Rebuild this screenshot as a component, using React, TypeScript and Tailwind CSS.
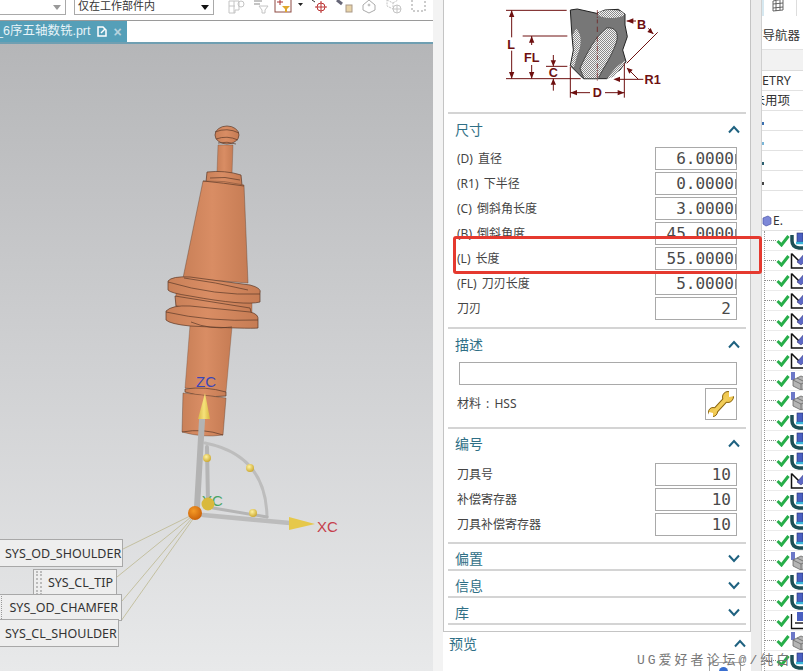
import React from "react";

function Chevron({ up, className = "" }: { up: boolean; className?: string }) {
  return (
    <svg width="12" height="9" viewBox="0 0 12 9" className={className}>
      <path d={up ? "M1 7.5 L6 2 L11 7.5" : "M1 1.5 L6 7 L11 1.5"} fill="none" stroke="#1f6280" strokeWidth="2" />
    </svg>
  );
}

function NumBox({ value, clip }: { value: string; clip?: boolean }) {
  return (
    <div className="w-[82px] h-[23px] shrink-0 border border-[#a9a9a9] bg-white overflow-hidden flex items-center justify-end font-['DejaVu_Sans_Mono',monospace] text-[16px] text-[#4a4a4a]">
      <span className={clip ? "mr-[1px] whitespace-nowrap" : "mr-[5px] whitespace-nowrap"}>{value}</span>
      {clip && <span className="w-[1px] h-[10px] shrink-0 bg-[#888]" />}
    </div>
  );
}

function Row({ label, value, clip = true }: { label: string; value: string; clip?: boolean }) {
  return (
    <div className="h-[25px] flex items-center justify-between pl-[9px] pr-[9px]">
      <span className="text-[12px] text-[#444] [word-spacing:2px]">{label}</span>
      <NumBox value={value} clip={clip} />
    </div>
  );
}

function Header({ title, up, cls }: { title: string; up: boolean; cls: string }) {
  return (
    <div className={`${cls} flex items-center justify-between pl-[7px] pr-[6px]`}>
      <span className="text-[14px] text-[#2f6f86]">{title}</span>
      <Chevron up={up} />
    </div>
  );
}

function Diagram() {
  const c = "#6e1010";
  return (
    <svg width="190" height="110" viewBox="0 0 570 330">
      <defs>
        <pattern id="hatch" width="6" height="6" patternUnits="userSpaceOnUse">
          <rect width="6" height="6" fill="#f4f4f4" />
          <rect width="3" height="3" fill="#8a8a8a" />
          <rect x="3" y="3" width="3" height="3" fill="#8a8a8a" />
        </pattern>
      </defs>
      <path d="M241 30 L262 27 L320 40 L345 30 L385 28 L405 42 L405 75 L412 110 L398 150 L408 185 L390 210 L350 236 L280 236 L241 197 L250 150 L246 110 Z" fill="#777" stroke="#222" strokeWidth="3" />
      <ellipse cx="363" cy="42" rx="40" ry="12" fill="url(#hatch)" />
      <path d="M258 86 C276 100 276 135 262 165 L252 202 L243 195 L252 150 L248 105 Z" fill="url(#hatch)" />
      <path d="M270 205 C290 160 315 110 350 84 C385 80 385 110 378 130 C360 180 335 210 325 236 L282 236 Z" fill="url(#hatch)" stroke="#222" strokeWidth="2" />
      <path d="M352 236 C375 200 395 190 405 180 L403 192 L372 230 Z" fill="url(#hatch)" />
      <g stroke={c} strokeWidth="3" fill="none">
        <path d="M48 31 H230 M48 236 H272 M98 108 H232 M168 199 H232" />
        <path d="M65 31 V112 M65 152 V236 M125 108 V135 M125 195 V236 M190 165 V199 M190 236 V272" />
        <path d="M241 200 V293 M403 190 V293 M241 278 H300 M345 278 H403" />
        <path d="M410 63 H438 M475 85 L490 102 M503 97 L410 190 M385 238 H460 M445 238 L412 205" />
        <path d="M322 30 V70 M322 80 V100 M322 110 V180 M322 190 V245" strokeWidth="2" strokeDasharray="16 4 4 4" />
      </g>
      <g fill={c}>
        <path d="M65 31 l-8 20 h16 Z M65 236 l-8 -20 h16 Z M125 108 l-8 20 h16 Z M125 236 l-8 -20 h16 Z" />
        <path d="M190 199 l-8 -18 h16 Z M190 236 l-8 18 h16 Z" />
        <path d="M241 278 l20 -8 v16 Z M403 278 l-20 -8 v16 Z" />
        <path d="M410 63 l20 -8 v16 Z M490 102 l-18 -6 l10 -12 Z M370 238 l20 -8 v16 Z M410 203 l18 6 l-10 12 Z" />
      </g>
      <g fill="#6e1010" fontFamily="Liberation Sans, sans-serif" fontWeight="700" fontSize="38" textAnchor="middle">
        <text x="63" y="146">L</text>
        <text x="125" y="187">FL</text>
        <text x="190" y="232">C</text>
        <text x="322" y="291">D</text>
        <text x="455" y="87">B</text>
        <text x="488" y="252">R1</text>
      </g>
    </svg>
  );
}

function ToolIcons() {
  return (
    <svg width="223" height="20" viewBox="210 0 223 20" className="shrink-0">
      <g fill="none" stroke="#c4c4c4" strokeWidth="1">
        <path d="M225 1 h10 v9 h-4 v3 h-6 Z M225 6 h6 M230 1 v12" />
        <circle cx="237" cy="4" r="3" />
        <path d="M250 1 h8 M250 4 h6" strokeWidth="2" />
        <path d="M255 6 h9 l-3 4 v3 h-3 v-3 Z" />
        <path d="M359 5 L365 0 L371 5 L371 10 L365 13 L359 10 Z" stroke="#aaa" />
        <circle cx="365" cy="5" r="1" fill="#aaa" />
        <path d="M383 0 l6 3 v6 l-6 -3 Z M389 3 l5 -3" strokeDasharray="2 1" />
        <circle cx="393" cy="9" r="4" />
        <path d="M393 5 v8 M389 9 h8" />
        <rect x="408" y="-2" width="13" height="13" strokeDasharray="2 2" stroke="#999" />
      </g>
      <rect x="271" y="-2" width="16" height="14" fill="none" stroke="#8d4a42" />
      <path d="M273 2 h6 M276 -1 v6" stroke="#a33" />
      <path d="M278 6 h8 l-3 3 v3 h-2 v-3 Z" fill="#e0a92e" />
      <path d="M294 3 h5 l-2.500 3 Z M430 3 h5 l-2.500 3 Z" fill="#222" />
      <circle cx="317" cy="7" r="4" fill="none" stroke="#b33" />
      <path d="M311 7 h12 M317 1 v12" stroke="#b33" />
      <path d="M308 0 l3 2" stroke="#333" />
      <path d="M333 0 l5 4" stroke="#667" strokeWidth="3" />
      <rect x="342" y="5" width="6" height="7" fill="#e8d3a8" stroke="#a98" />
    </svg>
  );
}

function ToolModel() {
  const edge = "#5c3a28";
  return (
    <svg width="433" height="627" viewBox="0 44 433 627" className="absolute left-0 top-0">
      <defs>
        <linearGradient id="cu" x1="0" x2="1" y1="0" y2="0">
          <stop offset="0" stopColor="#c98058" />
          <stop offset="0.45" stopColor="#d98d64" />
          <stop offset="1" stopColor="#c67c54" />
        </linearGradient>
        <linearGradient id="gold" x1="0" x2="1" y1="0" y2="0">
          <stop offset="0" stopColor="#d8b94a" />
          <stop offset="0.5" stopColor="#f6e27a" />
          <stop offset="1" stopColor="#d8b73f" />
        </linearGradient>
        <radialGradient id="ballY" cx="0.4" cy="0.35" r="0.7">
          <stop offset="0" stopColor="#fff3a0" />
          <stop offset="1" stopColor="#caa52c" />
        </radialGradient>
        <radialGradient id="ballO" cx="0.4" cy="0.35" r="0.7">
          <stop offset="0" stopColor="#f59a26" />
          <stop offset="1" stopColor="#c85f08" />
        </radialGradient>
      </defs>
      <g fill="url(#cu)" stroke={edge} strokeWidth="0.7" strokeLinejoin="round">
        <path d="M218 145 L233 145 L232 174 L217 172 Z" strokeWidth="0.3" />
        <ellipse cx="227" cy="135" rx="12" ry="9" />
        <path d="M215 132 Q227 127 239 133 M216 139 Q227 135 238 140 M218 143 Q227 141 236 144" fill="none" />
        <path d="M207 172 Q225 170 241 175 L242 185 L206 182 Z" />
        <path d="M210 178 Q225 176 240 180" fill="none" />
        <path d="M203 181 Q224 180 244 185 L248 283 L183 278 Z" strokeWidth="0.4" />
        <path d="M203 181 Q224 183 244 186" fill="none" />
        <path d="M190 325 L232 327 L226 392 L185 388 Z" strokeWidth="0.3" />
        <path d="M176 288 L252 296 L252 320 L176 312 Z" strokeWidth="0.3" />
        <path d="M175 296 L250 308 L252 316 L176 306 Z" />
        <path d="M166 311 Q172 305 190 306 L250 312 Q259 314 258 320 L258 328 Q250 329 190 326 Q170 324 166 320 Z" />
        <path d="M166 312 Q210 322 258 320 M191 322 Q210 330 232 327" fill="none" />
        <path d="M168 281 Q172 276 190 277 L250 285 Q262 288 260 293 L260 302 Q245 306 190 296 Q170 293 168 290 Z" />
        <path d="M168 282 Q215 296 260 294 M184 278 Q215 282 248 290" fill="none" />
        <path d="M185 389 Q205 386 226 392 L226 396 Q205 398 185 392 Z" />
        <path d="M183 393 Q205 395 226 398 L223 435 Q203 438 182 432 Z" strokeWidth="0.4" />
        <path d="M182 432 Q203 428 223 435" fill="none" />
      </g>
      <g fill="none" strokeLinecap="round">
        <path d="M207 447 L208 503" stroke="#b5b5b5" strokeWidth="4" />
        <path d="M205 443 Q266 455 267 517" stroke="#bdbdbd" strokeWidth="3" />
        <path d="M213 508 L267 517" stroke="#b5b5b5" strokeWidth="3" />
        <path d="M197 507 L202 420" stroke="#b3b3b3" strokeWidth="6" />
        <path d="M203 515 L290 523" stroke="#bcbcbc" strokeWidth="4.500" />
      </g>
      <path d="M205 393 L198 419 L210 419 Z" fill="url(#gold)" />
      <path d="M315 524 L289 517 L289 530 Z" fill="#e6c84a" />
      <path d="M123 549 L190 516 M117 577 L191 517 M122 601 L192 518 M121 621 L193 519" stroke="#bdb78f" strokeWidth="0.8" fill="none" />
      <g fontFamily="Liberation Sans, sans-serif" fontSize="15">
        <text x="196" y="387" fill="#3a46b8">ZC</text>
        <text x="317" y="532" fill="#c6404c">XC</text>
        <text x="202" y="506" fill="#4aa564">YC</text>
      </g>
      <circle cx="208" cy="504" r="6.500" fill="#d9b93d" />
      <circle cx="207" cy="458" r="4" fill="url(#ballY)" />
      <circle cx="250" cy="468" r="4" fill="url(#ballY)" />
      <circle cx="253" cy="513" r="4" fill="url(#ballY)" />
      <circle cx="195" cy="513" r="7" fill="url(#ballO)" />
    </svg>
  );
}

function Mill() {
  return (
    <svg width="22" height="18" viewBox="0 0 22 18" className="shrink-0">
      <path d="M2 3 V9 Q2 15 9 16 H18" fill="none" stroke="#1c4f55" strokeWidth="3.500" />
      <rect x="7" y="1" width="6" height="9" fill="#4a5fc0" stroke="#23306f" strokeWidth="0.6" />
      <path d="M6 11 H20" stroke="#38b6d8" strokeWidth="2.500" />
    </svg>
  );
}
function Pen() {
  return (
    <svg width="22" height="18" viewBox="0 0 22 18" className="shrink-0">
      <path d="M1.500 1.500 V16 H14 M1.500 1.500 L11 11" fill="none" stroke="#111" strokeWidth="1.500" />
      <path d="M7 10 L15 1 L20 5 L11 13 Z" fill="#5d68c4" stroke="#2f3478" strokeWidth="0.6" />
    </svg>
  );
}
function BoxIcon() {
  return (
    <svg width="22" height="18" viewBox="0 0 22 18" className="shrink-0">
      <rect x="1" y="0" width="4" height="8" fill="#6d78c8" />
      <path d="M3 8 L11 4 L20 8 L20 14 L11 18 L3 14 Z" fill="#b5b5b5" stroke="#666" strokeWidth="0.8" />
      <path d="M3 8 L11 12 L20 8 M11 12 V18 M7 6 L15 10" fill="none" stroke="#666" strokeWidth="0.8" />
    </svg>
  );
}
function LIcon() {
  return (
    <svg width="22" height="18" viewBox="0 0 22 18" className="shrink-0">
      <path d="M1.500 2 V16.500 H18" fill="none" stroke="#111" strokeWidth="1.300" />
      <rect x="7" y="0" width="6" height="9" fill="#4a5fc0" />
      <path d="M5 11 H20" stroke="#222" strokeWidth="1.500" />
    </svg>
  );
}

function WrenchIcon() {
  return (
    <svg width="28" height="28" viewBox="0 0 28 28">
      <g fill="none" strokeLinecap="round">
        <path d="M8 21 L20 8" stroke="#8a6510" strokeWidth="6" />
        <circle cx="21" cy="7" r="5.500" fill="#f0c850" stroke="#8a6510" strokeWidth="1" />
        <circle cx="6" cy="22" r="4.500" fill="#f0c850" stroke="#8a6510" strokeWidth="1" />
        <path d="M8 21 L20 8" stroke="#f2cd58" strokeWidth="4" />
      </g>
      <path d="M22 0 L28 0 L28 6 L22 7 Z" fill="#fff" />
      <path d="M1 27 L2 22 L6 23 L6 28 Z" fill="#fff" />
    </svg>
  );
}

const tree = ["m","p","p","p","p","p","p","b","b","m","m","m","p","m","m","m","b","m","m","l","b","m"];

function TreeRow({ kind }: { kind: string }) {
  return (
    <div className="h-[20px] shrink-0 flex items-center border-b border-[#ececec]">
      <div className="w-[11px] shrink-0 border-t border-dotted border-[#888]" />
      <svg width="14" height="13" viewBox="0 0 14 13" className="shrink-0">
        <path d="M1.500 7 L5.500 11 L12.500 2" fill="none" stroke="#27ae4a" strokeWidth="3" />
      </svg>
      {kind === "m" && <Mill />}
      {kind === "p" && <Pen />}
      {kind === "b" && <BoxIcon />}
      {kind === "l" && <LIcon />}
    </div>
  );
}

function ClipRow({ text, cls, tick }: { text?: string; cls?: string; tick?: string }) {
  return (
    <div className={`h-[20px] shrink-0 border-b border-[#e2e2e2] flex items-center overflow-hidden ${cls ?? ""}`}>
      {text && <span className="shrink-0 whitespace-nowrap text-[12.500px] text-[#333]">{text}</span>}
      {tick && <span className={`w-[2px] h-[3px] mt-[5px] ${tick}`} />}
    </div>
  );
}

const labelCls = "absolute border border-[#a8a8a8] bg-[#eeeeee] flex items-center pt-[2px] text-[12.500px] text-[#333]";

function Viewport() {
  return (
    <div className="relative flex-1 bg-gradient-to-b from-[#b5b6b8] via-[#cfd0d2] to-[#e8e9ea] overflow-hidden">
      <ToolModel />
      <div className={`${labelCls} left-[-1px] top-[495px] w-[124px] h-[28px] pl-[5px]`}>SYS_OD_SHOULDER</div>
      <div className={`${labelCls} left-[33px] top-[525px] w-[84px] h-[27px] justify-end pr-[3px]`}>
        <span className="absolute left-[2px] top-[1px] bottom-0 w-[6px] border-x-2 border-dotted border-[#bbb]" />
        SYS_CL_TIP
      </div>
      <div className={`${labelCls} left-[-1px] top-[550px] w-[123px] h-[27px] justify-end pr-[3px]`}>
        <span className="absolute left-[1px] top-[1px] bottom-[1px] w-[1px] border-l border-dotted border-[#999]" />
        SYS_OD_CHAMFER
      </div>
      <div className={`${labelCls} left-[-1px] top-[575px] w-[120px] h-[28px] pl-[5px]`}>SYS_CL_SHOULDER</div>
    </div>
  );
}

export default function App() {
  return (
    <div className="relative flex w-[803px] h-[671px] overflow-hidden bg-white font-['Noto_Sans','Noto_Sans_CJK_SC',sans-serif]">
      {/* CAD window */}
      <div className="w-[433px] h-full shrink-0 flex flex-col">
        <div className="h-[21px] shrink-0 flex items-start border-b border-[#9a9a9a] bg-white">
          <div className="w-[66px] h-[15px] shrink-0 border-b border-r border-[#a9a9a9] flex items-center justify-end pr-[4px]">
            <svg width="8" height="5" viewBox="0 0 8 5"><path d="M0 0 H8 L4 5 Z" fill="#999" /></svg>
          </div>
          <div className="ml-[8px] w-[140px] h-[15px] shrink-0 border-b border-x border-[#a9a9a9] flex items-center justify-between px-[3px] overflow-hidden">
            <span className="text-[11px] leading-[12px] text-[#333] -mt-[2px]">仅在工作部件内</span>
            <svg width="8" height="5" viewBox="0 0 8 5" className="mr-[1px]"><path d="M0 0 H8 L4 5 Z" fill="#111" /></svg>
          </div>
          <ToolIcons />
        </div>
        <div className="h-[23px] shrink-0 flex bg-white border-b-2 border-[#6f9fb2]">
          <div className="w-[127px] bg-[#559fb8] flex items-center text-[12.500px] text-[#e8f4f8] whitespace-nowrap font-['Liberation_Sans','Noto_Sans_CJK_SC',sans-serif]">
            <span className="-ml-[4px]">_6序五轴数铣.prt</span>
            <svg width="10" height="11" viewBox="0 0 10 11" className="ml-[7px] shrink-0">
              <path d="M1 1 H6 L9 4 V10 H1 Z" fill="none" stroke="#fff" strokeWidth="1.500" />
              <path d="M4 7 L8 3" stroke="#fff" strokeWidth="1.500" />
            </svg>
            <span className="ml-[6px] text-[14px] leading-none text-[#b9d3de] font-bold">×</span>
          </div>
        </div>
        <Viewport />
      </div>

      {/* Dialog */}
      <div className="w-[328px] h-full shrink-0 flex bg-[#ececec]">
        <div className="w-[10px] shrink-0 bg-[#f3f3f3]" />
        <div className="w-[308px] shrink-0 flex flex-col bg-white">
          <div className="h-[632px] shrink-0 flex flex-col border-x border-b border-[#c4c4c4] px-[4px]">
            <div className="h-[114px] shrink-0 flex justify-start border-b-2 border-[#d4d4d4] pl-[42px]">
              <Diagram />
            </div>
            <Header title="尺寸" up cls="h-[32px] pb-[2px]" />
            <Row label="(D) 直径" value="6.0000" />
            <Row label="(R1) 下半径" value="0.0000" />
            <Row label="(C) 倒斜角长度" value="3.0000" />
            <Row label="(B) 倒斜角度" value="45.0000" />
            <Row label="(L) 长度" value="55.0000" />
            <Row label="(FL) 刀刃长度" value="5.0000" />
            <Row label="刀刃" value="2" clip={false} />
            <div className="h-[8px] shrink-0 border-b-2 border-[#d4d4d4]" />
            <Header title="描述" up cls="h-[33px] pb-[2px]" />
            <div className="pl-[11px] pr-[9px]">
              <div className="h-[23px] border border-[#a9a9a9]" />
            </div>
            <div className="h-[34px] mt-[2px] flex items-center justify-between pl-[9px] pr-[9px]">
              <span className="text-[12px] text-[#444] [word-spacing:2px]">材料 : HSS</span>
              <div className="w-[32px] h-[32px] border border-[#a9a9a9] flex items-center justify-center">
                <WrenchIcon />
              </div>
            </div>
            <div className="h-[8px] shrink-0 border-b-2 border-[#d4d4d4]" />
            <Header title="编号" up cls="h-[33px] pb-[4px]" />
            <Row label="刀具号" value="10" clip={false} />
            <Row label="补偿寄存器" value="10" clip={false} />
            <Row label="刀具补偿寄存器" value="10" clip={false} />
            <div className="h-[7px] shrink-0 border-b-2 border-[#d4d4d4]" />
            <div className="border-b-2 border-[#d4d4d4]"><Header title="偏置" up={false} cls="h-[25px] pt-[4px]" /></div>
            <div className="border-b-2 border-[#d4d4d4]"><Header title="信息" up={false} cls="h-[25px] pt-[4px]" /></div>
            <div className="border-b-2 border-[#d4d4d4]"><Header title="库" up={false} cls="h-[25px] pt-[4px]" /></div>
          </div>
          <div className="flex-1 relative flex items-start justify-between pl-[6px] pr-[5px] pt-[1px]">
            <span className="text-[14px] text-[#2f6f86]">预览</span>
            <Chevron up className="mt-[6px]" />
            <div className="absolute left-[266px] top-[30px] w-[32px] h-[12px] border border-[#a9a9a9] border-b-0 bg-white pl-[9px]">
              <span className="block w-[9px] h-[5px] mt-[4px] bg-[#3a6fd0] rounded-t-full" />
            </div>
          </div>
        </div>
        <div className="flex-1" />
      </div>

      {/* Navigator */}
      <div className="flex-1 min-w-0 h-full flex flex-col bg-white overflow-hidden border-l border-[#d0d0d0]">
        <div className="h-[20px] shrink-0 flex items-start">
          <div className="w-[2px] h-[16px] bg-[#d6e8f0]" />
          <svg width="12" height="13" viewBox="0 0 12 13" className="ml-[8px] -mt-[1px]">
            <path d="M1 2 L11 0 V11 L1 12 Z M1 5 L11 4 M1 9 L11 8 M4 2 V12 M8 1 V11" fill="none" stroke="#555" strokeWidth="0.9" />
          </svg>
          <div className="ml-[12px] w-[1px] h-[16px] bg-[#ddd]" />
        </div>
        <div className="h-[30px] shrink-0 flex items-center justify-end overflow-hidden pr-[3px] pt-[3px] border-b border-[#e2e2e2]">
          <span className="shrink-0 whitespace-nowrap text-[12.500px] text-[#333]">工序导航器</span>
        </div>
        <div className="h-[21px] shrink-0 bg-[#f2f2f2] border-b border-[#dcdcdc]" />
        <ClipRow text="ETRY" cls="pt-[1px]" />
        <ClipRow text="未用项" cls="justify-end pr-[13px] pt-[1px]" />
        <ClipRow tick="bg-[#3a6fb0]" />
        <ClipRow tick="bg-[#7ab6d8]" />
        <ClipRow tick="bg-[#2b5f70]" />
        <ClipRow tick="bg-[#444]" />
        <ClipRow />
        <div className="h-[20px] shrink-0 flex items-center border-b border-[#e2e2e2]">
          <svg width="10" height="12" viewBox="0 0 10 12" className="shrink-0">
            <path d="M1 3 L6 1 L9 3 L9 9 L4 11 L1 9 Z" fill="#7d88d8" stroke="#4a55a8" strokeWidth="0.7" />
          </svg>
          <span className="ml-[1px] text-[12px] text-[#333]">E.</span>
        </div>
        <div className="flex flex-col border-l border-dotted border-[#999] ml-[2px]">
          {tree.map((k, i) => (
            <TreeRow key={i} kind={k} />
          ))}
        </div>
      </div>

      {/* Overlays */}
      <div className="absolute left-[453px] top-[236px] w-[309px] h-[38px] border-[3px] border-[#e5392f] rounded-[3px] pointer-events-none" />
      <div className="absolute left-[637px] top-[651px] whitespace-nowrap text-[13px] tracking-[3px] text-[#777] font-['Liberation_Mono','Noto_Sans_CJK_SC',monospace]">UG爱好者论坛@/纯白</div>
    </div>
  );
}
